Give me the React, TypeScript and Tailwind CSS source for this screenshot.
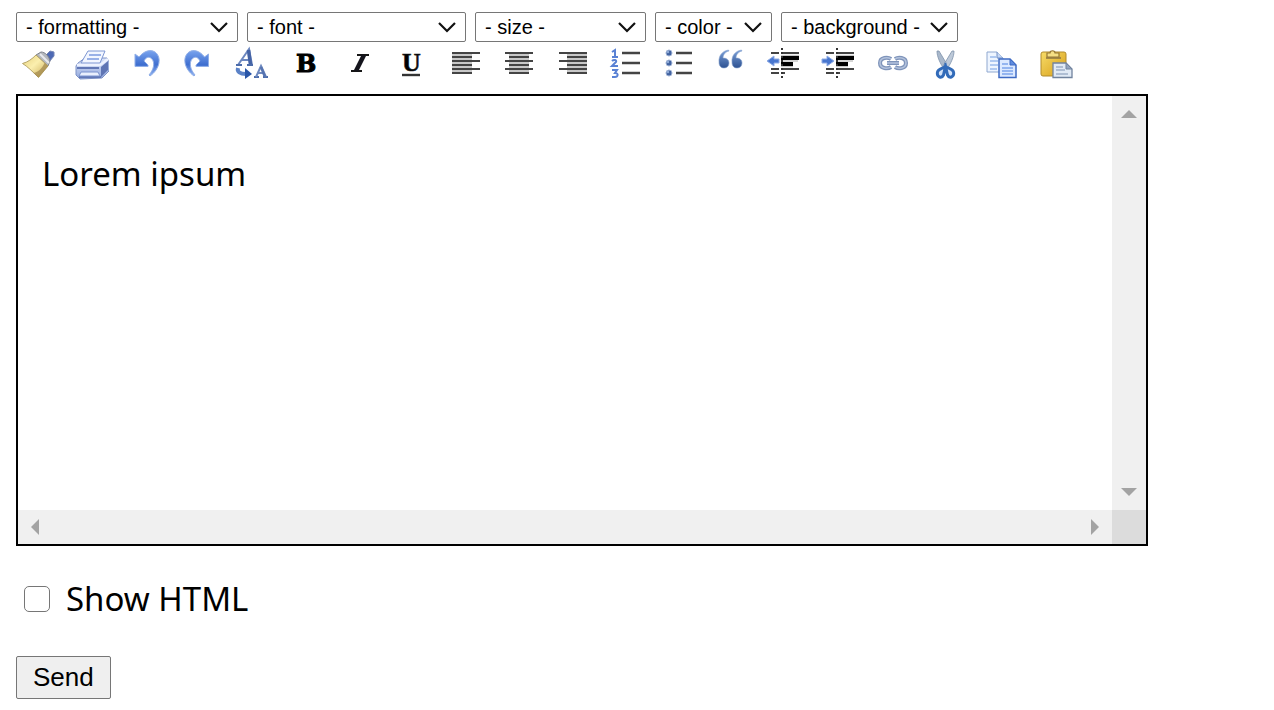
import React, { useState } from 'react';

interface Tool {
    name: string;
    width: number;
    icon: React.ReactNode;
}

const selects = [
    { name: 'formatting', width: 'w-[222px]', options: ['Paragraph', 'Heading 1', 'Heading 2'] },
    { name: 'font', width: 'w-[219px]', options: ['Arial', 'Courier', 'Times'] },
    { name: 'size', width: 'w-[171px]', options: ['Small', 'Medium', 'Large'] },
    { name: 'color', width: 'w-[117px]', options: ['Black', 'Red', 'Blue'] },
    { name: 'background', width: 'w-[177px]', options: ['White', 'Yellow', 'Green'] },
];

const lineRows = [7, 11, 15, 19, 23, 27];

// six stacked rules, every second one shortened
const AlignIcon: React.FC<{ from: number; to: number; shortFrom: number; shortTo: number }> = ({ from, to, shortFrom, shortTo }) => (
    <>
        <rect x={shortFrom} y="7" width={shortTo - shortFrom} height="20" fill="#c8c8c8" />
        {lineRows.map((y, i) => (
            <path key={y} d={i % 2 ? `M${shortFrom} ${y}H${shortTo}` : `M${from} ${y}H${to}`} stroke="#444" strokeWidth="2" />
        ))}
    </>
);

const IndentIcon: React.FC<{ x: number; arrow: string }> = ({ x, arrow }) => (
    <>
        <path d={`M${x + 4} 7h8M${x + 4} 23h8M${x + 4} 27h8M${x + 14} 7h18M${x + 14} 23h18M${x + 14} 27h4`} stroke="#444" strokeWidth="2" />
        <path d={`M${x + 14} 9.5h18M${x + 14} 15h17M${x + 14} 20.5h12`} stroke="#c8c8c8" strokeWidth="1.5" />
        <path d={`M${x + 14} 12h18M${x + 14} 18h12`} stroke="#000" strokeWidth="4" />
        <path d={`M${x + 15} 2V32`} stroke="#333" strokeWidth="2" strokeDasharray="2 2" />
        <path d={arrow} fill="#4876cf" stroke="#8eabe5" strokeWidth="1" />
    </>
);

const tools: Tool[] = [
    {
        name: 'Clean', width: 34, icon: (
            <>
                <path d="M24 10l5-5 4 1v4l-5 6z" fill="#4d69b5" stroke="#7586b5" />
                <path d="M15 9l5-3c4 0 8 4 9 9l-2 5z" fill="#b5b8bd" stroke="#7d828b" />
                <path d="M19 8l9 9" stroke="#e8eaee" strokeWidth="2" />
                <path d="M15 9C11 13 7 16 1.5 17.500c5 3 10 8 16 14L27 20z" fill="url(#bristle)" stroke="#b5a468" />
                <path d="M27 20l-9.500 11.500-5-4.500c5-1 9-5 11-10z" fill="#9a7f45" opacity=".65" />
            </>
        ),
    },
    {
        name: 'Print', width: 34, icon: (
            <>
                <path d="M3 17l7-5h22l2 4v9l-7 7-22 1-4-4v-9z" fill="url(#printer)" stroke="#7d92c6" />
                <path d="M13 5h17l-5 12H6z" fill="#f2f6ff" stroke="#7d96d2" />
                <path d="M14 9h12M12 13h12" stroke="#7c9ae0" strokeWidth="1.5" />
                <path d="M2 19h23l8-6" fill="none" stroke="#edf2ff" strokeWidth="2.5" />
                <path d="M26 21l7-6v9l-7 7z" fill="#5f75b4" />
                <path d="M2 22h22M4 31h22" stroke="#6177b6" strokeWidth="2" />
                <path d="M6 26h17l2 4H4z" fill="#e9effd" stroke="#7b93ce" />
            </>
        ),
    },
    {
        name: 'Undo', width: 34, icon: (
            <path d="M6 8l4 3C15 5 21 3 26 6c7 5 5 17-5 24l-1-1c5-6 6-12 3-16-3-3-6-2-8 2l4 4v1.500H6z" fill="url(#blue)" stroke="#91afe7" strokeWidth="1" />
        ),
    },
    {
        name: 'Redo', width: 30, icon: (
            <path d="M25.500 8l-4 3C17 5 11 3 6 6c-7 5-5 17 5 24l1-1c-5-6-6-12-3-16 3-3 6-2 8 2l-4 4v1.500h12.500z" fill="url(#blue)" stroke="#91afe7" strokeWidth="1" />
        ),
    },
    {
        name: 'Remove formatting', width: 36, icon: (
            <>
                <path d="M5 19L16 3l3 16M9 14h8" fill="none" stroke="#6d88c0" strokeWidth="2" />
                <path d="M15.500 4l2 15" stroke="#4563a5" strokeWidth="3.500" />
                <path d="M3 19h6M14 19h6M21 31h5M30 31h5" stroke="#4c6cab" strokeWidth="2" />
                <path d="M23 31l5-11 5 11M25 27h6" fill="none" stroke="#6e89bf" strokeWidth="2" />
                <path d="M28 21l4 10" stroke="#5674b1" strokeWidth="2.500" />
                <path d="M5 22c-1 4 2 6 8 6" fill="none" stroke="#5b82c7" strokeWidth="4" />
                <path d="M12 22l7 6-7 5z" fill="#2956a8" />
            </>
        ),
    },
    {
        name: 'Bold', width: 34, icon: (
            <text x="7" y="26" stroke="#000" strokeWidth="1" className="font-['DejaVu_Serif'] text-[24px] font-bold">B</text>
        ),
    },
    {
        name: 'Italic', width: 34, icon: (
            <>
                <path d="M14 9h12M8 25h11" stroke="#171717" strokeWidth="2" />
                <path d="M21 9l-8 16" stroke="#14141c" strokeWidth="4.500" />
            </>
        ),
    },
    {
        name: 'Underline', width: 30, icon: (
            <>
                <text x="5" y="25" stroke="#222" strokeWidth=".6" className="font-['Liberation_Serif'] text-[26px] font-bold">U</text>
                <path d="M5 29h18" stroke="#333" strokeWidth="2.400" />
            </>
        ),
    },
    { name: 'Align left', width: 34, icon: <AlignIcon from={5} to={33} shortFrom={5} shortTo={25} /> },
    { name: 'Align center', width: 34, icon: <AlignIcon from={4} to={32} shortFrom={8} shortTo={28} /> },
    { name: 'Align right', width: 34, icon: <AlignIcon from={4} to={32} shortFrom={12} shortTo={32} /> },
    {
        name: 'Ordered list', width: 34, icon: (
            <>
                <path d="M13 7h18M13 17h18M13 27h18" stroke="#444" strokeWidth="2.400" />
                <path d="M3 6l3-2v7M3 11h6M3 15c2-2 5-1 4 1l-4 4h6M3 24h5l-2 3c4 0 3 4 0 4H3" fill="none" stroke="#5a82d4" strokeWidth="2" />
            </>
        ),
    },
    {
        name: 'Bullet list', width: 30, icon: (
            <>
                <path d="M13 7h16M13 17h16M13 27h16" stroke="#444" strokeWidth="2.400" />
                {[7, 17, 27].map(y => (
                    <g key={y}>
                        <circle cx="6" cy={y} r="3" fill="#4263a0" stroke="#a0b3d5" />
                        <circle cx="5" cy={y - 1} r="1.200" fill="#91acd8" />
                    </g>
                ))}
            </>
        ),
    },
    {
        name: 'Quote', width: 34, icon: (
            <>
                <path id="quote" d="M15.500 4C9 5 5.500 10 6 16c0 4 2 6 5 6s5-2 5-5c0-3-2-5-6-5 0-3 2-6 6-7z" fill="url(#quoteFill)" stroke="#8ba6d0" strokeWidth=".6" />
                <use href="#quote" x="13" />
            </>
        ),
    },
    { name: 'Outdent', width: 34, icon: <IndentIcon x={0} arrow="M0 15l7-5v3h5v4H7v3z" /> },
    { name: 'Indent', width: 34, icon: <IndentIcon x={1} arrow="M13 15l-7-5v3H1v4h5v3z" /> },
    {
        name: 'Link', width: 34, icon: (
            <>
                <g fill="none" stroke="#7f94ba" strokeWidth="4">
                    <path d="M16 13c-3-2-11-2-11 4s8 6 11 4M20 13c3-2 11-2 11 4s-8 6-11 4" />
                    <path d="M12 17h12" />
                </g>
                <g fill="none" stroke="#b3c2dc" strokeWidth="1.500">
                    <path d="M16 13c-3-2-11-2-11 4s8 6 11 4M20 13c3-2 11-2 11 4s-8 6-11 4" />
                    <path d="M12 17h12" />
                </g>
            </>
        ),
    },
    {
        name: 'Cut', width: 34, icon: (
            <>
                <path d="M8 5l2 0 9 15-3 5C11 17 8 11 8 5z" fill="#a9b8cb" stroke="#7e92ab" strokeWidth=".8" />
                <path d="M25 5l-2 0-9 15 3 5c5-8 8-14 8-20z" fill="#bdc9d8" stroke="#7e92ab" strokeWidth=".8" />
                <path d="M16.500 20c-2 3-7 2-8 6-1 5 4 7 6 3l2-9c2 3 7 2 8 6 1 5-4 7-6 3z" fill="#d5e4fa" stroke="#326bb9" strokeWidth="3" />
            </>
        ),
    },
    {
        name: 'Copy', width: 34, icon: (
            <>
                <path d="M4 6h10l6 6v14H4z" fill="#eef5ff" stroke="#8fa8d0" />
                <path d="M14 6v6h6" fill="#c6d7f4" stroke="#7391c4" />
                <path d="M7 11h6M7 15h8M7 19h8M7 23h7" stroke="#9abbed" strokeWidth="1.500" />
                <path d="M16 13h11l6 6v12.500H16z" fill="#dce9ff" stroke="#3f6bc4" strokeWidth="1.500" />
                <path d="M27 13v6h6z" fill="#5e8cdf" stroke="#3f6bc4" />
                <path d="M19 18h6M19 22h11M19 25h11M19 28h11" stroke="#7ca4ec" strokeWidth="1.500" />
            </>
        ),
    },
    {
        name: 'Paste', width: 36, icon: (
            <>
                <rect x="4" y="6" width="25" height="24" rx="2" fill="url(#board)" stroke="#b18b2c" />
                <path d="M10 11V7h3c0-3 5-3 5 0h4v4z" fill="#f5df85" stroke="#967735" strokeWidth="1.200" />
                <path d="M9 12h15" stroke="#8d7440" strokeWidth="1.500" />
                <path d="M16 17h13l6 6v8.500H16z" fill="#e1eaf5" stroke="#71839e" strokeWidth="1.300" />
                <path d="M29 17v6h6z" fill="#93a5bf" stroke="#71839e" />
                <path d="M19 21h7M19 24h9M19 28h12" stroke="#9eb0c8" strokeWidth="1.500" />
            </>
        ),
    },
];

// gradients shared by the toolbar icons
const IconGradients: React.FC = () => (
    <svg className="absolute h-0 w-0" aria-hidden="true">
        <defs>
            <linearGradient id="bristle" x1="0" y1="0" x2="1" y2="1">
                <stop offset="0" stopColor="#e6cf7a" />
                <stop offset=".45" stopColor="#fbefae" />
                <stop offset="1" stopColor="#c6a650" />
            </linearGradient>
            <linearGradient id="printer" x1="0" y1="0" x2="0" y2="1">
                <stop offset="0" stopColor="#dbe4fa" />
                <stop offset="1" stopColor="#93a9dc" />
            </linearGradient>
            <linearGradient id="blue" x1="0" y1="0" x2="0" y2="1">
                <stop offset="0" stopColor="#78a3ee" />
                <stop offset=".55" stopColor="#3f6fd0" />
                <stop offset="1" stopColor="#91b4f3" />
            </linearGradient>
            <linearGradient id="quoteFill" x1="0" y1="0" x2="0" y2="1">
                <stop offset="0" stopColor="#7ba0d8" />
                <stop offset="1" stopColor="#2d5191" />
            </linearGradient>
            <linearGradient id="board" x1="0" y1="0" x2="1" y2="1">
                <stop offset="0" stopColor="#f7dc69" />
                <stop offset="1" stopColor="#d79e17" />
            </linearGradient>
        </defs>
    </svg>
);

const ScrollArrow: React.FC<{ label: string; points: string }> = ({ label, points }) => (
    <button type="button" aria-label={label} className="h-[34px] w-[34px] shrink-0">
        <svg width="34" height="34" viewBox="0 0 34 34" fill="#a3a3a3"><polygon points={points} /></svg>
    </button>
);

const App: React.FC = () => {
    const [content, setContent] = useState('Lorem ipsum');
    const [showHtml, setShowHtml] = useState(false);

    return (
        <form className="bg-white px-4 pt-3 text-black" onSubmit={e => e.preventDefault()}>
            <IconGradients />

            <div className="flex flex-wrap gap-[9px]">
                {selects.map(s => (
                    <div key={s.name} className={`relative ${s.width}`}>
                        <select
                            aria-label={s.name}
                            className="block h-[30px] w-full appearance-none rounded-[2px] border border-[#767676] bg-white pl-[9px] font-['Liberation_Sans',sans-serif] text-[20px] leading-7"
                        >
                            <option>- {s.name} -</option>
                            {s.options.map(o => <option key={o}>{o}</option>)}
                        </select>
                        <svg className="pointer-events-none absolute top-2 right-2 h-3.5 w-[22px]" viewBox="0 0 22 14" fill="none" stroke="#111" strokeWidth="2.2">
                            <path d="M3 3l8 8 8-8" />
                        </svg>
                    </div>
                ))}
            </div>

            {/* Toolbar */}
            <div className="mt-1 mb-3.5 flex flex-wrap gap-x-5 px-[5px]">
                {tools.map(t => (
                    <button key={t.name} type="button" title={t.name} aria-label={t.name}>
                        <svg width={t.width} height="34" viewBox={`0 0 ${t.width} 34`}>{t.icon}</svg>
                    </button>
                ))}
            </div>

            {/* Editing area */}
            <div className="max-w-[1132px] border-2 border-black">
                <div className="flex">
                    <textarea
                        aria-label="Message"
                        value={content}
                        onChange={e => setContent(e.target.value)}
                        className="h-[414px] min-w-0 flex-1 resize-none overflow-hidden px-6 py-[54px] font-['Noto_Sans',sans-serif] text-[33px] leading-[48px] outline-none"
                    />
                    <div className="flex flex-col justify-between bg-[#f0f0f0]">
                        <ScrollArrow label="Scroll up" points="9,22 17,14 25,22" />
                        <ScrollArrow label="Scroll down" points="9,12 17,20 25,12" />
                    </div>
                </div>
                <div className="flex bg-[#f0f0f0]">
                    <div className="flex flex-1 justify-between">
                        <ScrollArrow label="Scroll left" points="21,9 13,17 21,25" />
                        <ScrollArrow label="Scroll right" points="13,9 21,17 13,25" />
                    </div>
                    <div className="w-[34px] bg-[#dcdcdc]" />
                </div>
            </div>

            <label className="mt-[29px] flex w-fit items-center gap-4 pl-2 font-['Noto_Sans',sans-serif] text-[33px] leading-[48px]">
                <input
                    type="checkbox"
                    checked={showHtml}
                    onChange={e => setShowHtml(e.target.checked)}
                    className="h-[26px] w-[26px] appearance-none rounded-[5px] border border-[#767676] bg-white checked:bg-[#0075ff]"
                />
                Show HTML
            </label>

            <button type="submit" className="mt-[33px] h-[43px] rounded-[2px] border border-[#767676] bg-[#efefef] px-4 pb-0.5 font-['Liberation_Sans',sans-serif] text-[26px] leading-10">
                Send
            </button>
        </form>
    );
};

export default App;
